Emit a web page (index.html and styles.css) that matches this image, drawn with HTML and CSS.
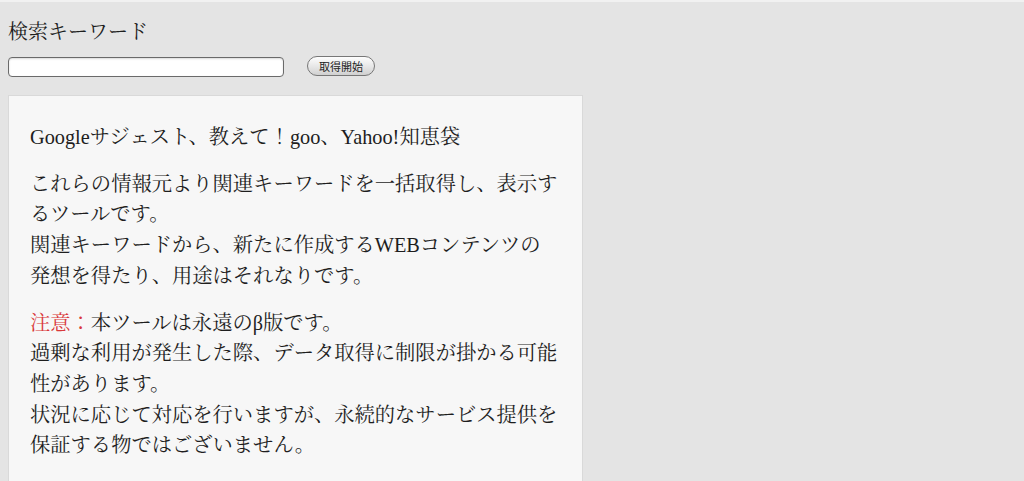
FILE: index.html
```html
<!DOCTYPE html>
<html lang="ja">
<head>
<meta charset="utf-8">
<title>関連キーワード取得ツール</title>
<link rel="stylesheet" href="styles.css">
</head>
<body>
<div class="page">
  <div class="search">
    <div class="search-label">検索キーワード</div>
    <div class="search-row">
      <input class="search-input" type="text">
      <button class="search-btn" type="button">取得開始</button>
    </div>
  </div>
  <div class="panel">
    <p class="para">Googleサジェスト、教えて！goo、Yahoo!知恵袋</p>
    <p class="para">これらの情報元より関連キーワードを一括取得し、表示するツールです。<br>関連キーワードから、新たに作成するWEBコンテンツの発想を得たり、用途はそれなりです。</p>
    <p class="para"><span class="warn">注意：</span>本ツールは永遠のβ版です。<br>過剰な利用が発生した際、データ取得に制限が掛かる可能性があります。<br>状況に応じて対応を行いますが、永続的なサービス提供を保証する物ではございません。</p>
  </div>
</div>
</body>
</html>
```

FILE: styles.css
```css
html, body {
  margin: 0;
  padding: 0;
  height: 100%;
  overflow: hidden;
}
body {
  background: #e4e4e4;
  border-top: 2px solid #f1f1f1;
  box-sizing: border-box;
  font-family: "Liberation Serif", "Noto Serif CJK JP", "Noto Sans CJK JP", serif;
  color: #1e1e1e;
}
.page {
  padding: 0 8px;
}
.search {
  padding-top: 18px;
}
.search-label {
  font-size: 20px;
  line-height: 24px;
}
.search-row {
  display: flex;
  align-items: center;
  margin-top: 13px;
}
.search-input {
  width: 276px;
  height: 20px;
  box-sizing: border-box;
  border: 1px solid #6a6a6a;
  border-radius: 4px;
  background: #fff;
  box-shadow: inset 0 1px 2px rgba(0,0,0,0.15);
  margin: 0;
  padding: 0 4px;
}
.search-btn {
  margin-left: 23px;
  width: 68px;
  height: 20px;
  box-sizing: border-box;
  border: 1px solid #777;
  border-radius: 10px;
  background: linear-gradient(#fdfdfd, #e6e6e6 55%, #d0d0d0);
  font-family: "Noto Sans CJK JP", sans-serif;
  font-size: 11px;
  line-height: 1;
  color: #222;
  padding: 0;
  position: relative;
  top: -1px;
}
.panel {
  margin-top: 18px;
  width: 575px;
  box-sizing: border-box;
  background: #f7f7f7;
  border: 1px solid #d9d9d9;
  padding: 26px 23px 20px 21px;
  min-height: 400px;
}
.para {
  margin: 0 0 16px;
  font-size: 20.3px;
  line-height: 30.7px;
}
.warn {
  color: #d9393b;
}
```
